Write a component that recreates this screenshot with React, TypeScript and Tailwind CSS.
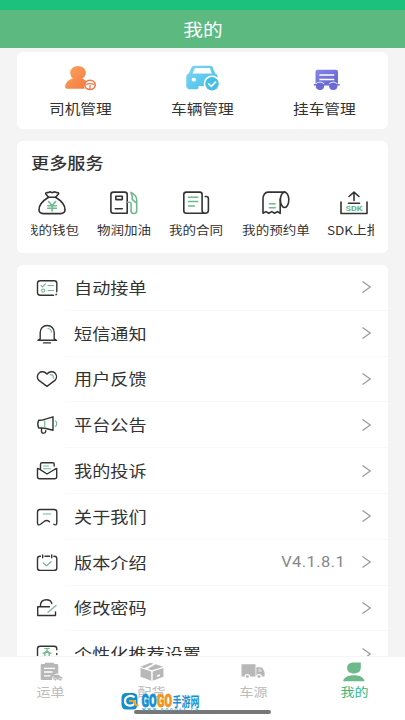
import type { ReactNode } from "react";

interface IconItem {
  label: string;
  icon: ReactNode;
}

interface ServiceItem extends IconItem {
  width: string;
}

interface MenuItem extends IconItem {
  value?: string;
}

const DARK = "#333333";
const GREEN = "#6fb98c";

/* 24x20 line icons for the menu rows */
function LineIcon({ children }: { children: ReactNode }) {
  return (
    <svg width="24" height="20" viewBox="0 0 24 20" fill="none" stroke={DARK} strokeWidth="1.4"
      strokeLinecap="round" strokeLinejoin="round">
      {children}
    </svg>
  );
}

/* 30x26 icons for the services row */
function ServiceIcon({ children }: { children: ReactNode }) {
  return (
    <svg width="30" height="26" viewBox="0 0 30 26" fill="none" stroke={DARK} strokeWidth="1.6"
      strokeLinecap="round" strokeLinejoin="round">
      {children}
    </svg>
  );
}

const managers: IconItem[] = [
  {
    label: "司机管理",
    icon: (
      <svg width="36" height="26" viewBox="0 0 36 26">
        <defs>
          <linearGradient id="driver" x1="0" y1="0" x2="1" y2="1">
            <stop offset="0" stopColor="#fba564" />
            <stop offset="1" stopColor="#f47a3c" />
          </linearGradient>
        </defs>
        <path d="M15 1C19.400 1 22.800 3.900 22.800 7.600c0 2.700-1.400 4.900-3.500 6 1.500.6 3 1.600 4.100 2.900a7 7 0 0 0-1.800 7.300H5.200c-2.200 0-3.200-.8-3-2.300.4-4 3.300-6.600 7.600-8-1.600-1.200-2.600-3.300-2.600-5.900C7.200 3.900 10.600 1 15 1z" fill="url(#driver)" />
        <ellipse cx="27" cy="19.900" rx="5.200" ry="4.600" fill="#fff" stroke="#ee7845" strokeWidth="1.600" />
        <path d="M23 19.500c2-1.300 6-1.300 8 0M27 20v4" fill="none" stroke="#ee7845" strokeWidth="1.300" />
      </svg>
    ),
  },
  {
    label: "车辆管理",
    icon: (
      <svg width="36" height="26" viewBox="0 0 36 26">
        <defs>
          <linearGradient id="car" x1="0" y1="0" x2="1" y2="1">
            <stop offset="0" stopColor="#83d5f4" />
            <stop offset="1" stopColor="#3fbfe6" />
          </linearGradient>
        </defs>
        <path d="M9.500.8h15.500c1.900 0 2.600 1 3.200 2.600l2 5.200c1.500.7 2.400 1.800 2.400 3.400v9H13.500v1.500c0 1.200-.7 1.800-1.800 1.800H4.200c-1.200 0-1.800-.7-1.800-1.800H1.300V12c0-1.700 1-2.900 2.500-3.500L6 3.400C6.600 1.800 7.500.8 9.500.8z" fill="url(#car)" />
        <path d="M10 3h14.800l2 5.600H7.500z" fill="#fff" />
        <ellipse cx="8.800" cy="14.700" rx="2.200" ry="1.900" fill="#fff" />
        <circle cx="27" cy="18.700" r="8.300" fill="#fff" />
        <circle cx="27" cy="18.700" r="6.800" fill="#45bfe5" />
        <path d="M23.300 18.500l3 2.800 4.800-4.600" fill="none" stroke="#fff" strokeWidth="1.700" />
      </svg>
    ),
  },
  {
    label: "挂车管理",
    icon: (
      <svg width="36" height="26" viewBox="0 0 36 26">
        <defs>
          <linearGradient id="trailer" x1="0" y1="0" x2="1" y2="1">
            <stop offset="0" stopColor="#8485e8" />
            <stop offset="1" stopColor="#6563cf" />
          </linearGradient>
        </defs>
        <rect x="8.500" y="4.700" width="22.500" height="15.300" rx="2.300" fill="url(#trailer)" />
        <path d="M12.300 10h15M12.300 14.500h15" stroke="#fff" strokeWidth="1.400" />
        <ellipse cx="13" cy="21.300" rx="5.100" ry="4.500" fill="#fff" />
        <ellipse cx="26.300" cy="21.300" rx="5.100" ry="4.500" fill="#fff" />
        <path d="M6.800 19.800h26" stroke="#6f6dd8" strokeWidth="1.500" />
        <ellipse cx="13" cy="21.300" rx="4.100" ry="3.700" fill="#6b69d6" />
        <ellipse cx="26.300" cy="21.300" rx="4.100" ry="3.700" fill="#6b69d6" />
      </svg>
    ),
  },
];

const services: ServiceItem[] = [
  {
    label: "我的钱包",
    width: "w-[54px]",
    icon: (
      <ServiceIcon>
        <path d="M11.500 7.300L8.800 4c-.5-1 .5-1.600 1.600-1.400 1.300.2 1.700-.7 2.700-.7.900 0 1.200.7 2.100.7s1.300-.7 2.300-.7c1.100 0 1.500.8 2.700.7 1-.1 1.800.5 1.300 1.400l-2.900 3.300" />
        <path d="M11.500 7.300h7.100c4.800 3 9.400 7.900 9.400 12.300 0 2.700-1.700 4-4.400 4H6.300c-2.600 0-4.300-1.300-4.300-4C2 15.200 6.700 10.300 11.500 7.300z" />
        <path d="M11.500 11.500l3.600 4 3.600-4M10.800 15.700h8.600M10.800 18.200h8.600M15.100 15.700v5.300" stroke={GREEN} />
      </ServiceIcon>
    ),
  },
  {
    label: "物润加油",
    width: "w-[54px]",
    icon: (
      <ServiceIcon>
        <path d="M18.200 23.300H4.200c-1.500 0-2.300-.8-2.300-2.200V4.500c0-1.500.9-2.400 2.500-2.400h11.300c1.600 0 2.500.9 2.500 2.400v18.800" />
        <path d="M6.800 6.300h6.500v3.300H6.800zM6.300 18.800h7" />
        <path d="M18.500 12.200h2c1.300 0 1.600.8 1.600 1.700v7.300c0 3 5.600 3 5.600 0V9.700c0-3-3-6.400-5.700-7.300l1.200 3.900v3l3.500 3" stroke={GREEN} />
      </ServiceIcon>
    ),
  },
  {
    label: "我的合同",
    width: "w-[54px]",
    icon: (
      <ServiceIcon>
        <path d="M24.500 23.300H5.500c-1.800 0-2.700-.9-2.700-2.500V4.500c0-1.500.9-2.400 2.500-2.400h13.500c1.500 0 2.300.9 2.300 2.400v15.800c0 4 6.300 4 6.300 0V8.500c0-1.300-.8-2-2.200-2h-1" />
        <path d="M7.500 7.300h9.300M7.500 11.500h9.300M7.500 16h5.800" stroke={GREEN} />
      </ServiceIcon>
    ),
  },
  {
    label: "我的预约单",
    width: "w-[68px]",
    icon: (
      <ServiceIcon>
        <path d="M24 2.100H7C4.200 2.100 2 5 2 9v14.300l3-1.700 2.800 1.700 2.900-1.700 2.900 1.700 2.800-1.700 2.800 1.700V9" />
        <ellipse cx="23.600" cy="9.800" rx="4.200" ry="7.700" />
        <path d="M8.500 13.700h5.700M8.500 17.700h5.700" stroke={GREEN} />
      </ServiceIcon>
    ),
  },
  {
    label: "SDK上报",
    width: "w-[52px]",
    icon: (
      <ServiceIcon>
        <path d="M2 12v11.500h26V12M9.500 13.300h11M15 10.500V2.300M10 6.500l5-4.300 5 4.300" />
        <text x="15" y="21.300" textAnchor="middle" fill="#5db77f" stroke="none" textLength="17" lengthAdjust="spacingAndGlyphs"
          className="font-['Roboto',sans-serif] text-[7px] font-bold">
          SDK
        </text>
      </ServiceIcon>
    ),
  },
];

const menu: MenuItem[] = [
  {
    label: "自动接单",
    icon: (
      <LineIcon>
        <path d="M18.500 17.200H5.200c-1.800 0-2.700-.8-2.700-2.400V5.300c0-1.700.9-2.500 2.700-2.500h13.900c1.800 0 2.700.8 2.700 2.500v8.500M21.500 16.300l-.6.500" />
        <g stroke={GREEN} strokeWidth="1.100">
          <path d="M6 7.500l1.500 1.300L10.400 6M13 7.500h5.500M13 12.500h5.500" />
          <circle cx="8.200" cy="12.600" r="1.600" />
        </g>
      </LineIcon>
    ),
  },
  {
    label: "短信通知",
    icon: (
      <LineIcon>
        <path d="M5.200 14.800V8.500C5.200 4.400 8.100 1.500 12.200 1.500s7 2.900 7 7v6.300l2.300 1.500H2.900l2.300-1.500zM8.500 18.900h7" />
        <path d="M13 4.500c2 .2 3.300 1.600 3.400 3.500" stroke={GREEN} strokeWidth="1.200" />
      </LineIcon>
    ),
  },
  {
    label: "用户反馈",
    icon: (
      <LineIcon>
        <path d="M12 5C9.800 2.300 6.200 2 4.100 3.900c-2.400 2.200-2.200 5.400-.2 7.500l8.100 6 7.900-6c2-2.100 2.200-5.300 0-7.500C17.700 2 14.200 2.300 12 5z" />
        <path d="M15.500 5.600c2.300-.2 3.200 1.400 2.700 3.500" stroke={GREEN} strokeWidth="1.200" />
      </LineIcon>
    ),
  },
  {
    label: "平台公告",
    icon: (
      <LineIcon>
        <path d="M3.700 5.300c2 .1 4.100-.2 6-.9l8.300-2.600v13.400l-8.200-2c-1.900-.3-4-.2-6.100-.2-1.100-2.200-1.100-5.400 0-7.700z" />
        <path d="M6.500 13.500v2.700c0 2.500 3.800 2.600 4.200.4v-.8" />
        <path d="M9.700 5.500v6.500M20.200 5.800c2 .7 2 4.700 0 5.500" stroke={GREEN} strokeWidth="1.200" />
      </LineIcon>
    ),
  },
  {
    label: "我的投诉",
    icon: (
      <LineIcon>
        <path d="M5.500 8V3.300c0-1 .6-1.500 1.600-1.500h10.500c1 0 1.600.5 1.600 1.500V5M4.500 8.200l-2-.7v8.200c0 1.300.7 2 2 2h15.200c1.300 0 2-.7 2-2V7.500l-2.200 1L12 13 4.500 8.200z" />
        <path d="M8.500 5h5M8.500 7.800h7" stroke={GREEN} strokeWidth="1.100" />
      </LineIcon>
    ),
  },
  {
    label: "关于我们",
    icon: (
      <LineIcon>
        <path d="M14.500 14.700c-1.800-1.600-3.200-1.700-5-.5l-4 3c-1.700 1.200-3 .7-3-1.100V5c0-1.700.9-2.500 2.700-2.500h13.900c1.800 0 2.700.8 2.700 2.500v11.100c0 1.900-1.400 2.300-3 1.100" />
        <path d="M8.500 7h7" stroke={GREEN} strokeWidth="1.200" />
      </LineIcon>
    ),
  },
  {
    label: "版本介绍",
    value: "V4.1.8.1",
    icon: (
      <LineIcon>
        <path d="M5.500 3.300H5c-1.700 0-2.500.8-2.500 2.400v9.200c0 1.600.9 2.500 2.700 2.500h13.900c1.800 0 2.700-.9 2.700-2.500V5.700c0-1.600-.8-2.400-2.500-2.400h-.5M10 3.300h4.500M7.700 2v2.800M16.700 2v2.800" />
        <path d="M8.300 10l3.200 2.900 4.500-4.200" stroke={GREEN} strokeWidth="1.200" />
      </LineIcon>
    ),
  },
  {
    label: "修改密码",
    icon: (
      <LineIcon>
        <path d="M14.500 8.800H2.700v8.700h17.800v-3.500M5.500 8.500V7c0-3.300 2.500-5.300 5.800-5.300 2.800 0 5 1.500 5.500 3.800" />
        <path d="M21 7.500l-8 6.800" stroke="#83b9a0" />
      </LineIcon>
    ),
  },
  {
    label: "个性化推荐设置",
    icon: (
      <LineIcon>
        <path d="M20.500 17.500H5.200c-1.800 0-2.700-.8-2.700-2.400V4.800c0-1.700.9-2.500 2.700-2.500h13.900c1.800 0 2.700.8 2.700 2.500v1M21.800 9.500v1" />
        <g stroke={GREEN} strokeWidth="1.200">
          <path d="M9.700 4.500h4.600M12 4.500v3.500M8 9.500l4-2.500 4 2.500" />
          <circle cx="12" cy="10.500" r="2.300" />
        </g>
      </LineIcon>
    ),
  },
];

const tabs: IconItem[] = [
  {
    label: "运单",
    icon: (
      <svg width="26" height="20" viewBox="0 0 26 20" fill="#b8b8b8">
        <path d="M4 2h3V.8h9V2h3c.8 0 1.300.4 1.300 1.200v8.300c-3.800 0-6 2-6.300 6.500H4c-.8 0-1.300-.4-1.300-1.200V3.200C2.700 2.400 3.200 2 4 2z" />
        <path d="M6 6.300h11M6 10h8.500M6 13.800h6.500" stroke="#fff" strokeWidth="1.300" />
        <path d="M15.300 12.800h5l4 2.700v2.300h-9z" />
        <circle cx="17.300" cy="17.500" r="1.400" stroke="#fff" strokeWidth=".6" />
        <circle cx="22.300" cy="17.500" r="1.400" stroke="#fff" strokeWidth=".6" />
      </svg>
    ),
  },
  {
    label: "配货",
    icon: (
      <svg width="26" height="20" viewBox="0 0 26 20" fill="#b8b8b8">
        <path d="M1.500 4.800L11.500.8l3 .9-9.200 4.500zM16.500 2.200l7.800 2.500L13 8.300 8.500 7zM1.500 6l10.700 3.500v9.300L1.500 14.700zM13.700 9.500L24.500 6v8.700l-10.800 4.100z" />
        <path d="M18 13.300l3-1v1.700l-3 1z" fill="#fff" />
      </svg>
    ),
  },
  {
    label: "车源",
    icon: (
      <svg width="26" height="20" viewBox="0 0 26 20" fill="#b8b8b8">
        <path d="M1.500 2.200h14v12.300h-14zM16.300 5.300h4c1.700.1 3.200 1.800 4.300 5v4.200h-8.300z" />
        <path d="M18.500 6.800h2l1.800 3h-3.800z" fill="#dadada" />
        <ellipse cx="7.300" cy="14.500" rx="2.300" ry="1.900" stroke="#fff" strokeWidth="1.200" />
        <ellipse cx="19" cy="14.500" rx="2.300" ry="1.900" stroke="#fff" strokeWidth="1.200" />
      </svg>
    ),
  },
  {
    label: "我的",
    icon: (
      <svg width="26" height="20" viewBox="0 0 26 20" fill="#6db989">
        <path d="M12.500.5h7.300v5.300c0 3.600-2.800 5.700-6.700 5.700-4.200 0-7-2.200-7-5.500C6.100 2.600 8.700.5 12.500.5zM2.200 19.300c.3-3.900 4.900-6 10.600-6s10.400 2.100 10.700 6z" />
      </svg>
    ),
  },
];

function Watermark() {
  return (
    <svg className="absolute left-[119px] top-[32px]" width="84" height="27" viewBox="0 0 84 27">
      <rect x="2.500" y="4" width="16" height="16.500" rx="4.500" fill="#168fcd" />
      <path d="M15.500 8.500c-3-3-9.500-1.500-9.500 3.500s6.500 6 9.500 2.800V12h-5" fill="none" stroke="#fff" strokeWidth="2.200" />
      <path d="M10 12h5c0 3 1 4.300 4.500 4.500" fill="none" stroke="#f7a12c" strokeWidth="2" />
      <g strokeWidth=".8" className="font-['Roboto',sans-serif] text-[18px] font-black">
        <text x="22.500" y="17.500" textLength="15" lengthAdjust="spacingAndGlyphs" fill="#168fd5" stroke="#168fd5">GO</text>
        <text x="38" y="17.500" textLength="15" lengthAdjust="spacingAndGlyphs" fill="#f39319" stroke="#f39319">GO</text>
      </g>
      <text x="53.500" y="16.500" textLength="27" lengthAdjust="spacingAndGlyphs" fill="#168fd5"
        className="font-['Noto_Sans_CJK_SC',sans-serif] text-[13px] font-bold">
        手游网
      </text>
      <text x="23" y="21.800" textLength="56" fill="#4b9fd2" className="font-['Roboto',sans-serif] text-[4px] font-bold">
        WWW.GOGO65.CN
      </text>
    </svg>
  );
}

export default function App() {
  return (
    <div className="flex h-[720px] w-[405px] flex-col overflow-hidden bg-[#f4f4f4] font-['Noto_Sans_CJK_SC',sans-serif] text-[#333]">
      {/* Header */}
      <div className="h-[10px] shrink-0 bg-[#1cc17e]" />
      <header className="flex h-[38px] shrink-0 items-center justify-center bg-[#5cba80]">
        <h1 className="scale-x-[1.16] text-[17px] leading-6 text-white">我的</h1>
      </header>

      <main className="flex min-h-0 flex-1 flex-col gap-3 overflow-hidden px-[17px] pt-1">
        {/* Management shortcuts */}
        <section className="grid h-[77px] shrink-0 grid-cols-3 rounded-md bg-white px-[2.5px] pt-[13px]">
          {managers.map((m) => (
            <div key={m.label} className="flex flex-col items-center">
              {m.icon}
              <span className="mt-[7px] scale-x-[1.15] whitespace-nowrap text-[13.7px] leading-5">{m.label}</span>
            </div>
          ))}
        </section>

        {/* Services */}
        <section className="h-[112px] shrink-0 rounded-md bg-white px-[14px] pt-[9px]">
          <h2 className="origin-left scale-x-[1.17] text-[15.5px] leading-6 font-medium">更多服务</h2>
          <div className="mt-4 overflow-hidden">
            <div className="-ml-[6px] flex gap-[18.2px]">
              {services.map((s) => (
                <div key={s.label} className={`flex shrink-0 flex-col items-center ${s.width}`}>
                  {s.icon}
                  <span className="mt-[5px] scale-x-[1.13] whitespace-nowrap text-[12px] leading-[18px]">{s.label}</span>
                </div>
              ))}
            </div>
          </div>
        </section>

        {/* Menu */}
        <section className="shrink-0 rounded-t-md bg-white pl-[18px]">
          {menu.map((m) => (
            <div key={m.label} className="flex h-[45.8px] items-center">
              {m.icon}
              <div className="ml-[6px] flex h-full flex-1 items-center border-b border-[#f8f8f8] pr-[16px] pl-[9px]">
                <span className="-mt-px origin-left scale-x-[1.17] whitespace-nowrap text-[15.5px] leading-6">{m.label}</span>
                {m.value && (
                  <span className="mr-[16px] ml-auto origin-right scale-x-[1.1] font-['Roboto',sans-serif] text-[15px] tracking-[0.4px] text-[#888]">
                    {m.value}
                  </span>
                )}
                <svg className={m.value ? "" : "ml-auto"} width="11" height="14" viewBox="0 0 11 14" fill="none" stroke="#999" strokeWidth="1.2">
                  <path d="M1.500 1.500L9.300 7l-7.800 5.500" />
                </svg>
              </div>
            </div>
          ))}
        </section>
      </main>

      {/* Tab bar */}
      <nav className="relative grid h-[64px] shrink-0 grid-cols-4 border-t border-[#f5f5f5] bg-white pt-[4.5px]">
        {tabs.map((t) => (
          <div
            key={t.label}
            className={`flex flex-col items-center ${t.label === "我的" ? "text-[#35b779]" : "text-[#bbb]"}`}
          >
            {t.icon}
            <span className="mt-[1.5px] scale-x-[1.12] text-[12.5px] leading-[18px]">{t.label}</span>
          </div>
        ))}
        <div className="absolute top-[53px] left-[134px] h-[3.5px] w-[137px] rounded-full bg-[#777]" />
        <Watermark />
      </nav>
    </div>
  );
}
